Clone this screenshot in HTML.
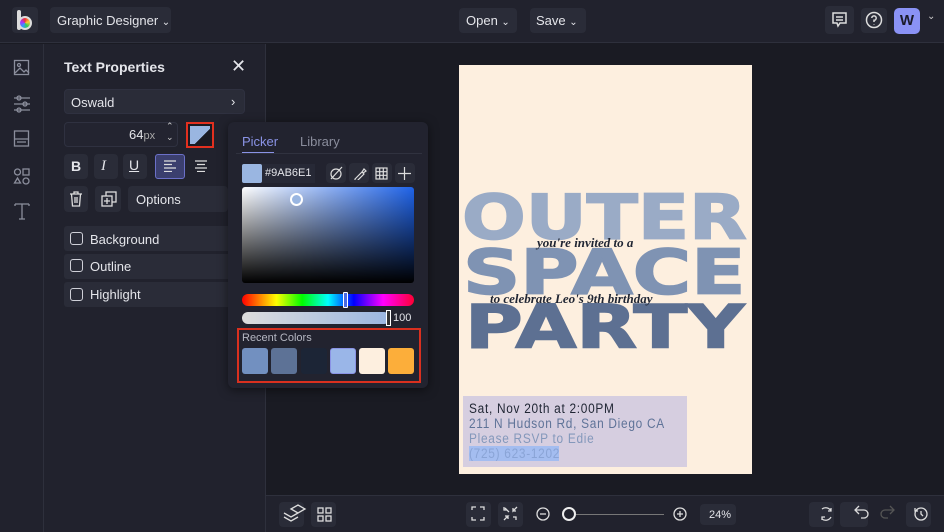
<!DOCTYPE html>
<html><head><meta charset="utf-8"><style>
*{box-sizing:border-box;margin:0;padding:0}
body{width:944px;height:532px;overflow:hidden;background:#1a1b23;font-family:"Liberation Sans",sans-serif;color:#e4e5ea;position:relative}
.abs{position:absolute}
.btn{position:absolute;background:#2a2c38;border-radius:4px}
.top{left:0;top:0;width:944px;height:43px;background:#21222d;border-bottom:1px solid #2e303c}
.side{left:0;top:44px;width:44px;height:488px;background:#21222d;border-right:1px solid #2e303c}
.panel{left:44px;top:44px;width:222px;height:488px;background:#21222d;border-right:1px solid #2e303c}
.bottom{left:266px;top:495px;width:678px;height:37px;background:#21222d;border-top:1px solid #2e303c}
.t13{font-size:13px}
svg{position:absolute}
.chk{position:absolute;left:70px;width:13px;height:13px;border:1.5px solid #cfd0d8;border-radius:3px}
.row{position:absolute;left:64px;width:170px;height:25px;background:#2a2c38;border-radius:3px}
.big{position:absolute;font-family:"DejaVu Sans",sans-serif;font-weight:bold;font-size:75px;line-height:1;white-space:nowrap;transform-origin:left top;-webkit-text-stroke:2px currentColor}
.script{position:absolute;font-family:"Liberation Serif",serif;font-style:italic;font-weight:bold;color:#1f2533;font-size:13px;white-space:nowrap}
.info{position:absolute;left:469px;font-size:13.5px;letter-spacing:.8px;white-space:nowrap;transform:scaleX(.88);transform-origin:left top}
.sw{position:absolute;top:348px;width:26px;height:26px;border-radius:3px}
</style></head><body>
<div class="abs top"></div>
<div class="btn" style="left:12px;top:7px;width:26px;height:26px"></div>
<div class="abs" style="left:17px;top:10px;width:4px;height:20px;background:#ddd;border-radius:2px"></div>
<div class="abs" style="left:18px;top:16px;width:14px;height:14px;border-radius:50%;background:conic-gradient(#e33,#fc3,#3c5,#39f,#a3f,#e33);border:2px solid #ddd"></div>
<div class="btn" style="left:50px;top:7px;width:121px;height:26px"></div>
<div class="abs t13" style="left:57px;top:13px">Graphic Designer <span style="font-size:10px">⌄</span></div>
<div class="btn" style="left:459px;top:8px;width:58px;height:25px"></div>
<div class="abs t13" style="left:466px;top:13px">Open <span style="font-size:10px">⌄</span></div>
<div class="btn" style="left:530px;top:8px;width:56px;height:25px"></div>
<div class="abs t13" style="left:536px;top:13px">Save <span style="font-size:10px">⌄</span></div>
<div class="btn" style="left:825px;top:6px;width:29px;height:28px"></div>
<svg style="left:831px;top:11px" width="17" height="17" viewBox="0 0 17 17" fill="none" stroke="#ddd" stroke-width="1.5"><path d="M2 2h13v10H9l-2 3-1-3H2z M5 6h7 M5 9h7"/></svg>
<div class="btn" style="left:861px;top:8px;width:26px;height:25px"></div>
<svg style="left:865px;top:11px" width="18" height="18" viewBox="0 0 18 18" fill="none" stroke="#ddd" stroke-width="1.5"><circle cx="9" cy="9" r="7.5"/><path d="M6.8 7a2.2 2.2 0 1 1 2.2 2.3V11 M9 13v.5"/></svg>
<div class="abs" style="left:894px;top:8px;width:26px;height:26px;background:#8a92f5;border-radius:5px;color:#1a1b2a;font-weight:bold;font-size:15px;text-align:center;line-height:26px">W</div>
<div class="abs" style="left:927px;top:11px;font-size:10px;color:#ccc">⌄</div>

<div class="abs side"></div>
<svg style="left:13px;top:59px" width="18" height="170" viewBox="0 0 18 170" fill="none" stroke="#8b8e9c" stroke-width="1.3">
<rect x="1.5" y="1.5" width="14" height="14"/><circle cx="6" cy="6" r="1.5"/><path d="M2 14l5-5 4 4 2-2 3 3"/>
<path d="M1 39h16 M1 45h16 M1 51h16"/><circle cx="6" cy="39" r="2"/><circle cx="12" cy="45" r="2"/><circle cx="6" cy="51" r="2"/>
<rect x="1.5" y="72" width="14" height="15"/><path d="M1.5 80h14 M4 83h9"/>
<circle cx="4.5" cy="113" r="3"/><rect x="10" y="110" width="6" height="6"/><path d="M4.5 119l3 5h-6z"/><circle cx="13" cy="122" r="3"/>
<path d="M2 145h14 M2 145v2 M16 145v2 M9 145v15 M6 160h6"/>
</svg>

<div class="abs panel"></div>
<div class="abs" style="left:64px;top:59px;font-size:14px;font-weight:bold">Text Properties</div>
<div class="abs" style="left:231px;top:56px;font-size:18px">✕</div>
<div class="btn" style="left:64px;top:89px;width:181px;height:25px;border:1px solid #2f3140"></div>
<div class="abs t13" style="left:71px;top:95px">Oswald</div>
<div class="abs t13" style="left:231px;top:94px">›</div>
<div class="btn" style="left:64px;top:122px;width:114px;height:25px;background:#232430;border:1px solid #2f3140"></div>
<div class="abs t13" style="left:129px;top:127px">64<span style="font-size:11px;color:#aaa">px</span></div>
<div class="abs" style="left:166px;top:121px;font-size:9px;line-height:11px;color:#ccc">⌃<br>⌄</div>
<div class="abs" style="left:186px;top:122px;width:28px;height:26px;border:2px solid #e2301f;background:#1a1b23"></div>
<div class="abs" style="left:190px;top:126px;width:20px;height:18px;background:linear-gradient(135deg,#9ab6e1 60%,#1a1b23 60%)"></div>
<div class="btn" style="left:64px;top:154px;width:24px;height:25px"></div><div class="abs" style="left:71px;top:158px;font-weight:bold;font-size:14px">B</div>
<div class="btn" style="left:94px;top:154px;width:24px;height:25px"></div><div class="abs" style="left:101px;top:158px;font-family:'Liberation Serif';font-style:italic;font-size:15px">I</div>
<div class="btn" style="left:123px;top:154px;width:24px;height:25px"></div><div class="abs" style="left:129px;top:157px;text-decoration:underline;font-size:14px">U</div>
<div class="abs" style="left:155px;top:154px;width:30px;height:25px;background:#3b3f6e;border:1px solid #6b70c8;border-radius:3px"></div>
<svg style="left:163px;top:160px" width="14" height="12" stroke="#ddd" stroke-width="1.3"><path d="M1 1h12 M1 4.5h8 M1 8h12 M1 11.5h8"/></svg>
<svg style="left:194px;top:160px" width="14" height="12" stroke="#ddd" stroke-width="1.3"><path d="M1 1h12 M3 4.5h8 M1 8h12 M3 11.5h8"/></svg>
<div class="btn" style="left:64px;top:186px;width:24px;height:26px"></div>
<svg style="left:69px;top:191px" width="14" height="16" fill="none" stroke="#ddd" stroke-width="1.3"><path d="M1 3h12 M5 3V1h4v2 M2.5 3l1 12h7l1-12 M6 6v6 M8 6v6"/></svg>
<div class="btn" style="left:95px;top:186px;width:26px;height:26px"></div>
<svg style="left:101px;top:191px" width="16" height="16" fill="none" stroke="#ddd" stroke-width="1.3"><rect x="5" y="1" width="10" height="10"/><rect x="1" y="5" width="10" height="10" fill="#2a2c38"/><path d="M6 7v6 M3 10h6"/></svg>
<div class="btn" style="left:128px;top:186px;width:100px;height:26px"></div>
<div class="abs t13" style="left:136px;top:192px">Options</div>
<div class="row" style="top:226px"></div><div class="chk" style="top:232px"></div><div class="abs t13" style="left:90px;top:232px">Background</div>
<div class="row" style="top:254px"></div><div class="chk" style="top:259px"></div><div class="abs t13" style="left:90px;top:259px">Outline</div>
<div class="row" style="top:282px"></div><div class="chk" style="top:288px"></div><div class="abs t13" style="left:90px;top:287px">Highlight</div>

<!-- card -->
<div class="abs" style="left:459px;top:65px;width:293px;height:409px;background:#fdefdf"></div>
<div style="position:absolute;left:459px;top:65px;width:293px;height:409px;overflow:hidden">
<div class="big" style="left:3px;top:122px;color:#9aabc6;transform:scale(1.0,.82)">OUTER</div>
<div class="big" style="left:4px;top:177px;color:#7f93b3;transform:scale(1.06,.82)">SPACE</div>
<div class="big" style="left:6px;top:232px;color:#5d7092;transform:scale(1.05,.8)">PARTY</div>
</div>
<div class="script" style="left:537px;top:235px">you're invited to a</div>
<div class="script" style="left:490px;top:291px">to celebrate Leo's 9th birthday</div>
<div class="abs" style="left:463px;top:396px;width:224px;height:71px;background:#d6cee0"></div>
<div class="info" style="top:401px;color:#1f2533">Sat, Nov 20th at 2:00PM</div>
<div class="info" style="top:416px;color:#5f7398">211 N Hudson Rd, San Diego CA</div>
<div class="info" style="top:431px;color:#8498bb">Please RSVP to Edie</div>
<div class="abs" style="left:469px;top:446px;width:90px;height:15px;background:#a4bdf0"></div>
<div class="info" style="top:446px;color:#8aa4d6">(725) 623-1202</div>

<!-- popover -->
<div class="abs" style="left:228px;top:122px;width:200px;height:266px;background:#22232f;border-radius:6px;box-shadow:0 2px 10px rgba(0,0,0,.5)"></div>
<div class="abs t13" style="left:242px;top:134px;color:#8a93e6">Picker</div>
<div class="abs" style="left:242px;top:152px;width:32px;height:2px;background:#8a93e6"></div>
<div class="abs t13" style="left:300px;top:134px;color:#8a8d9c">Library</div>
<div class="abs" style="left:236px;top:153px;width:186px;height:1px;background:#30323f"></div>
<div class="abs" style="left:242px;top:164px;width:20px;height:19px;background:#9ab6e1;border-radius:2px"></div>
<div class="abs" style="left:262px;top:164px;width:53px;height:19px;background:#272936"></div>
<div class="abs" style="left:265px;top:167px;font-size:11px">#9AB6E1</div>
<div class="btn" style="left:326px;top:163px;width:20px;height:20px"></div>
<div class="btn" style="left:349px;top:163px;width:20px;height:20px"></div>
<div class="btn" style="left:372px;top:163px;width:20px;height:20px"></div>
<div class="btn" style="left:395px;top:163px;width:20px;height:20px"></div>
<svg style="left:329px;top:166px" width="86" height="14" fill="none" stroke="#ddd" stroke-width="1.2"><circle cx="7" cy="8" r="5"/><path d="M2 13L13 1"/><path d="M26 13l7-7 2 2-7 7h-2z M33 6l2-3 2 2-3 2"/><rect x="47" y="2" width="11" height="11"/><path d="M47 5.7h11 M47 9.3h11 M50.7 2v11 M54.3 2v11"/><path d="M69 7.5h13 M75.5 1v13"/></svg>
<div class="abs" style="left:242px;top:187px;width:172px;height:96px;border-radius:3px;background:linear-gradient(to bottom,transparent,#000),linear-gradient(to right,#fff,#1f63e8)"></div>
<div class="abs" style="left:290px;top:193px;width:13px;height:13px;border:2px solid #fff;border-radius:50%;background:#9ab6e1"></div>
<div class="abs" style="left:242px;top:294px;width:172px;height:12px;border-radius:6px;background:linear-gradient(to right,#f00,#ff0 20%,#0f0 35%,#0ff 50%,#00f 65%,#f0f 82%,#f03)"></div>
<div class="abs" style="left:343px;top:292px;width:5px;height:16px;border:1.5px solid #fff;background:#4a6ae0;border-radius:1px"></div>
<div class="abs" style="left:242px;top:312px;width:148px;height:12px;border-radius:6px;background:linear-gradient(to right,#ddd,#9ab6e1)"></div>
<div class="abs" style="left:386px;top:310px;width:5px;height:16px;border:1.5px solid #fff;background:#333"></div>
<div class="abs" style="left:393px;top:312px;font-size:11px">100</div>
<div class="abs" style="left:237px;top:328px;width:184px;height:55px;border:2px solid #d9301f"></div>
<div class="abs" style="left:242px;top:332px;font-size:11px;color:#b5b7c2">Recent Colors</div>
<div class="sw" style="left:242px;background:#7290c0"></div>
<div class="sw" style="left:271px;background:#5d7296"></div>
<div class="sw" style="left:301px;background:#1c2536"></div>
<div class="sw" style="left:330px;background:#9ab6e8;border:1.5px solid #8a93e6"></div>
<div class="sw" style="left:359px;background:#fdefdf"></div>
<div class="sw" style="left:388px;background:#fcae3a"></div>

<!-- bottom -->
<div class="abs bottom"></div>
<div class="btn" style="left:279px;top:502px;width:25px;height:25px"></div>
<div class="btn" style="left:311px;top:502px;width:25px;height:25px"></div>
<div class="btn" style="left:466px;top:502px;width:25px;height:25px"></div>
<div class="btn" style="left:498px;top:502px;width:25px;height:25px"></div>
<div class="btn" style="left:700px;top:504px;width:36px;height:21px"></div>
<div class="abs" style="left:709px;top:509px;font-size:11px">24%</div>
<div class="abs" style="left:576px;top:514px;width:88px;height:1px;background:#777"></div>
<div class="abs" style="left:562px;top:507px;width:14px;height:14px;border:2px solid #eee;border-radius:50%;background:#21222d"></div>
<div class="btn" style="left:809px;top:502px;width:25px;height:25px"></div>
<div class="btn" style="left:840px;top:502px;width:28px;height:25px"></div>
<div class="btn" style="left:906px;top:502px;width:25px;height:25px"></div>
<svg style="left:266px;top:495px" width="678" height="37" fill="none" stroke="#ddd" stroke-width="1.3">
<path d="M25 15l7-4 7 4-7 4z M18 19l7 4 7-4 M18 23l7 4 7-4" transform="translate(0,-1)"/>
<rect x="52" y="13" width="5" height="5"/><rect x="60" y="13" width="5" height="5"/><rect x="52" y="21" width="5" height="5"/><rect x="60" y="21" width="5" height="5"/>
<path d="M206 15v-3h4 M214 12h4v3 M218 22v3h-4 M210 25h-4v-3"/>
<path d="M238 12v3h3 M243 17l-4-4 M251 12l-4 4v-3 M247 16h3 M238 25l4-4h-3 M242 21v3 M250 25v-3h-3"/>
<circle cx="277" cy="19" r="6"/><path d="M274 19h6"/>
<circle cx="414" cy="19" r="6"/><path d="M411 19h6 M414 16v6"/>
<path d="M561 14a6 6 0 0 1 9 2 M570 13v3h-3 M561 24a6 6 0 0 0 9-2 M561 25v-3h3" transform="translate(-5,0)"/>
<path d="M593 14l-4 4 4 4 M589 18h9a4 4 0 0 1 0 8h-3" transform="translate(0,-3)"/>
<path d="M624 14l4 4-4 4 M628 18h-9a4 4 0 0 0 0 8h3" stroke="#555" transform="translate(0,-3)"/>
<circle cx="655" cy="19" r="6"/><path d="M655 16v3l2 2 M649 13v3h3"/>
</svg>
</body></html>
